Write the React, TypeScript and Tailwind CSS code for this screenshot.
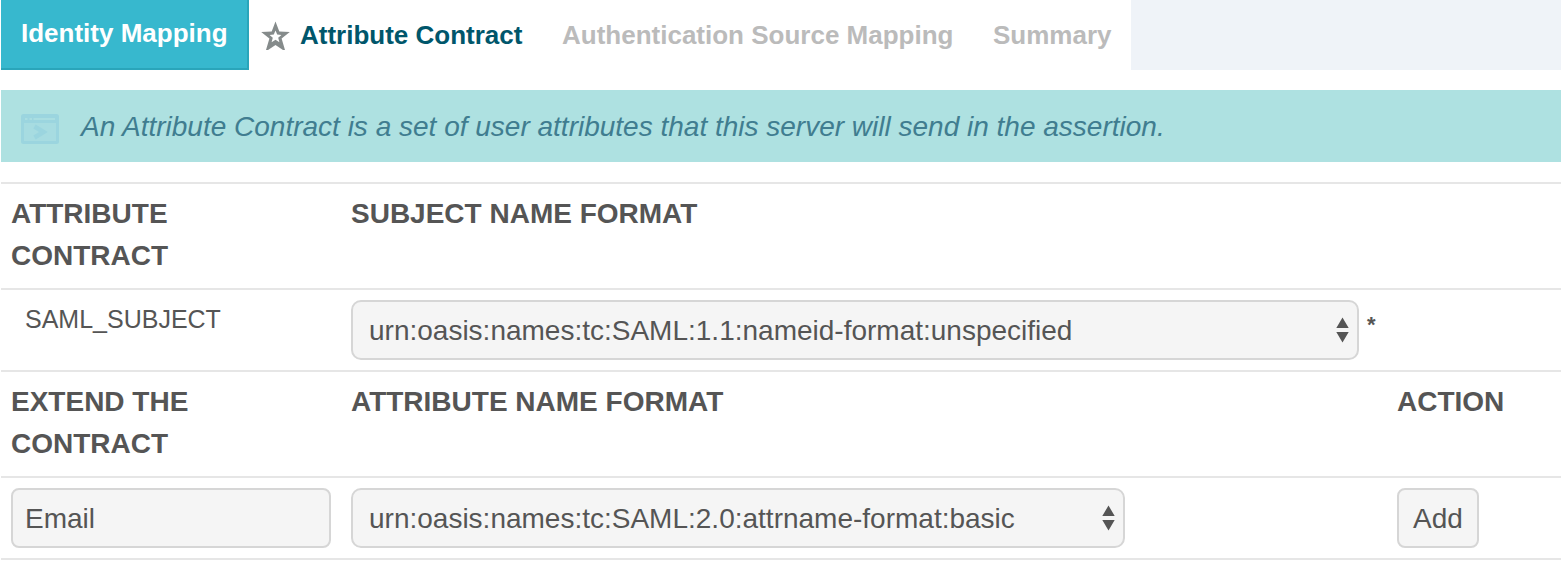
import React from "react";

function StarIcon() {
  return (
    <svg className="h-[30px] w-[30px] shrink-0" viewBox="0 0 30 30">
      <g className="blur-[0.5px]">
        <path
          d="M15.5 1.5L19.3 11.6L29.8 12L21.6 18.6L25 30H23L15.5 25L8 30H6L9.4 18.6L1.2 12L11.7 11.6Z"
          fill="#858b8b"
        />
        <path
          d="M15.5 10.4L17.2 14.6L21.4 15L18.2 17.8L19.4 22.2L15.5 19.8L11.6 22.2L12.8 17.8L9.6 15L13.8 14.6Z"
          fill="#fff"
        />
      </g>
    </svg>
  );
}

function WindowIcon() {
  return (
    <svg className="h-[30px] w-[38px] shrink-0" viewBox="0 0 38 30" fill="none">
      <rect x="1" y="1" width="36" height="28" rx="1" fill="#a7dce1" />
      <rect x="1.5" y="1.5" width="35" height="27" rx="1" stroke="#9bd5df" strokeWidth="3" />
      <path d="M2 5H36" stroke="#9bd5df" strokeWidth="8" />
      <path d="M4 5H6.5M8.5 5H11M12.5 5H34" stroke="#a9dee1" strokeWidth="2" />
      <path d="M13.5 12.5l9 5.5L13.5 23.5" stroke="#9bd5df" strokeWidth="4.5" />
    </svg>
  );
}

function Select({ value, className }: { value: string; className: string }) {
  return (
    <div
      className={
        "flex h-[60px] items-center justify-between rounded-[10px] border-2 border-[#d6d6d6] bg-[#f5f5f5] pl-4 pr-2 " +
        className
      }
    >
      <span className="pt-0.5 text-[28px] leading-[56px]">{value}</span>
      <svg className="h-[26px] w-[13px]" viewBox="0 0 13 26" fill="#555">
        <path d="M6.5 0.5L12.7 11H0.3zM6.5 25.5L12.7 15H0.3z" />
      </svg>
    </div>
  );
}

const heading = "-mt-px mb-px text-[28px] font-bold leading-[42px]";
const row = "flex border-b-2 border-[#e6e6e6] py-2.5 pl-2.5";

export default function App() {
  return (
    <div className="h-[576px] w-[1561px] overflow-hidden bg-white pl-px font-['Liberation_Sans',Arial,sans-serif] text-[#555]">
      <nav className="flex h-[70px] bg-[#eff3f8] text-[26px] font-bold leading-[30px]">
        <div className="w-[248px] shrink-0 border-b-2 border-r-2 border-[#2aa5ba] bg-[#37b8ce] pl-5 pt-[18px] text-white">
          Identity Mapping
        </div>
        <div className="flex w-[882px] shrink-0 bg-white pt-5">
          <div className="flex w-[313px] pl-[11px] text-[#00566b]">
            <StarIcon />
            <span className="ml-[10px]">Attribute Contract</span>
          </div>
          <div className="w-[431px] text-[#bbb]">Authentication Source Mapping</div>
          <div className="text-[#bbb]">Summary</div>
        </div>
      </nav>

      <div className="mt-5 flex h-[72px] items-center bg-[#aee1e1] pl-5 text-[#407d90]">
        <div className="pt-[6px]">
          <WindowIcon />
        </div>
        <p className="ml-[22px] pt-0.5 text-[28px] italic leading-[42px]">
          An Attribute Contract is a set of user attributes that this server will send in the assertion.
        </p>
      </div>

      <div className="mt-5 border-t-2 border-[#e6e6e6]">
        <div className={row}>
          <div className={heading + " w-[340px] pr-[120px]"}>ATTRIBUTE CONTRACT</div>
          <div className={heading}>SUBJECT NAME FORMAT</div>
        </div>
        <div className={row}>
          <div className="w-[340px] pl-3.5 text-[25px] leading-[38px]">SAML_SUBJECT</div>
          <Select className="w-[1008px]" value="urn:oasis:names:tc:SAML:1.1:nameid-format:unspecified" />
          <span className="ml-2 mt-[10px] text-[22px] font-bold leading-[30px]">*</span>
        </div>
        <div className={row}>
          <div className={heading + " w-[340px] pr-[120px]"}>EXTEND THE CONTRACT</div>
          <div className={heading + " w-[1046px]"}>ATTRIBUTE NAME FORMAT</div>
          <div className={heading}>ACTION</div>
        </div>
        <div className={row}>
          <div className="mr-5 h-[60px] w-[320px] rounded-lg border-2 border-[#d6d6d6] bg-[#f5f5f5] pl-3 pt-px text-[28px] leading-[56px]">
            Email
          </div>
          <Select className="w-[774px]" value="urn:oasis:names:tc:SAML:2.0:attrname-format:basic" />
          <button className="ml-[272px] h-[60px] w-[82px] rounded-lg border-2 border-[#d6d6d6] bg-[#f5f5f5] pt-px text-[28px] leading-[56px]">
            Add
          </button>
        </div>
      </div>
    </div>
  );
}
